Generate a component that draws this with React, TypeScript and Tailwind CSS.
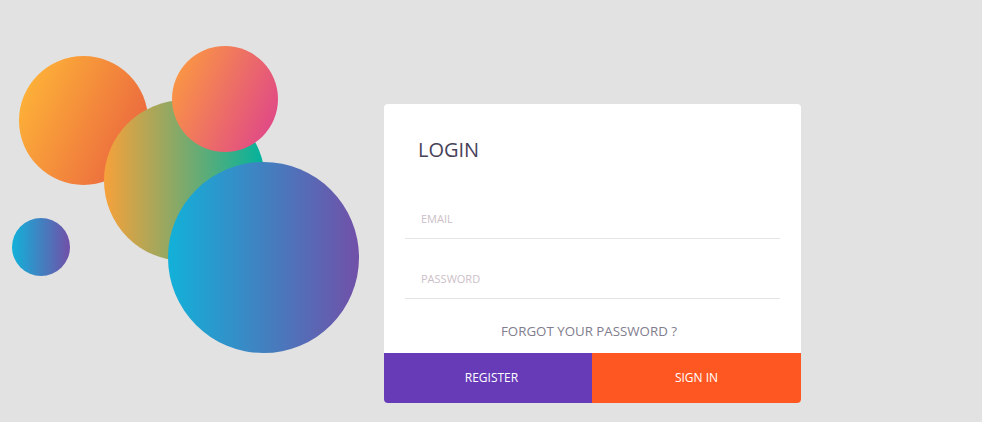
import React from "react";

export default function App() {
  return (
    <div
      className="flex h-[422px] w-[982px] overflow-hidden bg-[#e2e2e2]"
      style={{ fontFamily: '"Open Sans", "Noto Sans", sans-serif' }}
    >
      <div className="relative h-[422px] w-[384px] shrink-0" aria-hidden="true">
        <div className="absolute left-[19px] top-[56px] h-[129px] w-[129px] rounded-full bg-[linear-gradient(115deg,#ffbb37,#e85a40)]" />
        <div className="absolute left-[104px] top-[100px] h-[161px] w-[161px] rounded-full bg-[linear-gradient(90deg,#f7a13a,#00b39e)]" />
        <div className="absolute left-[172px] top-[46px] h-[106px] w-[106px] rounded-full bg-[linear-gradient(115deg,#fda03b,#dd3f8f)]" />
        <div className="absolute left-[12px] top-[218px] h-[58px] w-[58px] rounded-full bg-[linear-gradient(90deg,#12b1d9,#7150a8)]" />
        <div className="absolute left-[168px] top-[162px] h-[191px] w-[191px] rounded-full bg-[linear-gradient(90deg,#12b1d9,#7150a8)]" />
      </div>

      <div className="mt-[104px] flex h-[299px] w-[417px] shrink-0 flex-col overflow-hidden rounded-[4px] bg-white pt-[32px]">
        <h1 className="h-[28px] pl-[34px] text-[20px] font-normal leading-[28px] text-[#47425a]">
          LOGIN
        </h1>
        <input
          type="email"
          placeholder="EMAIL"
          className="mx-[21px] mt-[35px] h-[40px] border-b border-[#e5e5e5] bg-transparent px-[16px] text-[11px] text-[#47425a] outline-none placeholder:text-[#ccc0c8]"
        />
        <input
          type="password"
          placeholder="PASSWORD"
          className="mx-[21px] mt-[20px] h-[40px] border-b border-[#e5e5e5] bg-transparent px-[16px] text-[11px] text-[#47425a] outline-none placeholder:text-[#ccc0c8]"
        />
        <div className="mt-[22px] h-[20px] pr-[7px] text-center text-[13.3px] leading-[20px] text-[#7f7d8e]">
          FORGOT YOUR PASSWORD ?
        </div>
        <div className="mt-[12px] flex h-[50px]">
          <button className="flex w-[208px] items-center justify-center bg-[#673ab7] pl-[7px] text-[12px] text-white">
            REGISTER
          </button>
          <button className="flex flex-1 items-center justify-center bg-[#ff5722] text-[12px] text-white">
            SIGN IN
          </button>
        </div>
      </div>
    </div>
  );
}
